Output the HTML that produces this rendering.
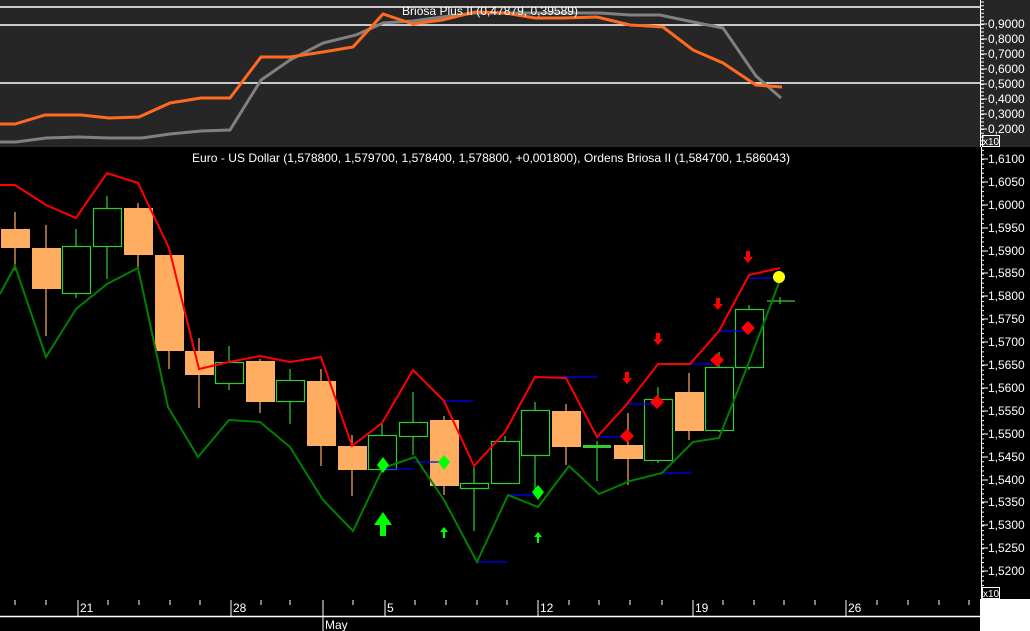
<!DOCTYPE html>
<html><head><meta charset="utf-8"><style>
html,body{margin:0;padding:0;background:#000;width:1030px;height:631px;overflow:hidden}
svg{display:block}
text{font-family:"Liberation Sans",sans-serif;fill:#fff;font-size:12px}
</style></head><body>
<svg width="1030" height="631" viewBox="0 0 1030 631" xmlns="http://www.w3.org/2000/svg">
<defs>
<pattern id="mt" patternUnits="userSpaceOnUse" x="0" y="159" width="10" height="4.58"><rect x="0" y="0" width="4" height="1" fill="#fff"/></pattern>
<pattern id="mt2" patternUnits="userSpaceOnUse" x="0" y="9" width="10" height="3.75"><rect x="0" y="0" width="4" height="1" fill="#fff"/></pattern>
</defs>
<rect x="0" y="0" width="1030" height="631" fill="#000"/>
<!-- top panel -->
<rect x="0" y="0" width="1030" height="147" fill="#262626"/>
<g stroke="#fff" stroke-width="1.5">
<line x1="0" y1="7" x2="980" y2="7"/><line x1="0" y1="25" x2="980" y2="25"/><line x1="0" y1="83" x2="980" y2="83"/>
</g>
<polyline fill="none" stroke="#808080" stroke-width="3" points="0,142 16,142 46,138 78,137 109,138 142,138 170,134 201,131 230,130 261,80 290,60 323,43 356,35 383,23 413,21 442,17 475,13 508,13 538,13 568,13 600,13 630,15 660,15 693,22 723,28 756,76 781,98"/>
<polyline fill="none" stroke="#FF6A20" stroke-width="3" points="0,124 15,124 45,115 81,115 109,118 139,117 170,103 201,98 230,98 261,57 290,57 323,52 353,47 383,14 413,24 442,20 475,12 505,13 535,18 564,18 597,17 630,25 663,27 693,50 723,63 756,85 782,87"/>
<text x="402" y="15" textLength="176" lengthAdjust="spacingAndGlyphs">Briosa Plus II (0,47879, 0,39589)</text>
<line x1="980.5" y1="0" x2="980.5" y2="147" stroke="#fff"/>
<rect x="980" y="0" width="4" height="147" fill="url(#mt2)"/>
<g stroke="#fff"><line x1="980" y1="24" x2="987" y2="24"/><line x1="980" y1="39" x2="987" y2="39"/><line x1="980" y1="54" x2="987" y2="54"/><line x1="980" y1="69" x2="987" y2="69"/><line x1="980" y1="84" x2="987" y2="84"/><line x1="980" y1="99" x2="987" y2="99"/><line x1="980" y1="114" x2="987" y2="114"/><line x1="980" y1="129" x2="987" y2="129"/></g>
<g><text x="988" y="28">0,9000</text><text x="988" y="43">0,8000</text><text x="988" y="58">0,7000</text><text x="988" y="73">0,6000</text><text x="988" y="88">0,5000</text><text x="988" y="103">0,4000</text><text x="988" y="118">0,3000</text><text x="988" y="133">0,2000</text></g>
<rect x="982.5" y="135.5" width="17" height="11" fill="none" stroke="#fff"/><text x="983" y="145" style="font-size:10px">x10</text>

<!-- main title -->
<text x="192" y="162" textLength="598" lengthAdjust="spacingAndGlyphs">Euro - US Dollar (1,578800, 1,579700, 1,578400, 1,578800, +0,001800), Ordens Briosa II (1,584700, 1,586043)</text>

<!-- wicks -->
<g stroke="#FFAD60" stroke-width="1.2">
<line x1="15" y1="212" x2="15" y2="270"/><line x1="46" y1="225" x2="46" y2="336"/><line x1="138" y1="203" x2="138" y2="267"/><line x1="169" y1="255" x2="169" y2="369"/><line x1="199" y1="338" x2="199" y2="408"/><line x1="260" y1="359" x2="260" y2="413"/><line x1="321" y1="369" x2="321" y2="466"/><line x1="352" y1="435" x2="352" y2="496"/><line x1="444" y1="416" x2="444" y2="495"/><line x1="566" y1="404" x2="566" y2="465"/><line x1="628" y1="413" x2="628" y2="485"/><line x1="689" y1="373" x2="689" y2="440"/>
</g>
<g stroke="#33CC33" stroke-width="1.2">
<line x1="76" y1="229" x2="76" y2="298"/><line x1="107" y1="196" x2="107" y2="279"/><line x1="229" y1="346" x2="229" y2="390"/><line x1="290" y1="369" x2="290" y2="424"/><line x1="382" y1="424" x2="382" y2="472"/><line x1="413" y1="392" x2="413" y2="455"/><line x1="474" y1="467" x2="474" y2="531"/><line x1="505" y1="436" x2="505" y2="483"/><line x1="535" y1="402" x2="535" y2="490"/><line x1="597" y1="441" x2="597" y2="481"/><line x1="658" y1="387" x2="658" y2="463"/><line x1="719" y1="352" x2="719" y2="432"/><line x1="749" y1="305" x2="749" y2="370"/>
<line x1="767" y1="301" x2="795" y2="301"/><line x1="780" y1="297" x2="780" y2="304"/>
</g>
<!-- bodies -->
<g fill="#FFAD60">
<rect x="1" y="229" width="29" height="19"/><rect x="32" y="248" width="29" height="41"/><rect x="124" y="208" width="29" height="47"/><rect x="155" y="255" width="29" height="96"/><rect x="185" y="351" width="29" height="24"/><rect x="246" y="361" width="29" height="41"/><rect x="307" y="381" width="29" height="65"/><rect x="338" y="446" width="29" height="24"/><rect x="430" y="420" width="29" height="66"/><rect x="552" y="411" width="29" height="36"/><rect x="614" y="445" width="29" height="14"/><rect x="675" y="392" width="29" height="39"/>
</g>
<g fill="#000" stroke="#33CC33" stroke-width="1.2">
<rect x="62.5" y="246.5" width="28" height="47"/><rect x="93.5" y="208.5" width="28" height="38"/><rect x="215.5" y="362.5" width="28" height="21"/><rect x="276.5" y="380.5" width="28" height="21"/><rect x="368.5" y="435.5" width="28" height="34"/><rect x="399.5" y="422.5" width="28" height="14"/><rect x="460.5" y="483.5" width="28" height="5"/><rect x="491.5" y="441.5" width="28" height="42"/><rect x="521.5" y="410.5" width="28" height="45"/><rect x="644.5" y="399.5" width="28" height="61"/><rect x="705.5" y="367.5" width="28" height="63"/><rect x="735.5" y="309.5" width="28" height="58"/>
</g>
<rect x="583" y="445" width="28" height="3" fill="#33CC33"/>

<!-- blue lines -->
<g stroke="#0000FF" stroke-width="1.3">
<line x1="383" y1="469" x2="413" y2="469"/><line x1="413" y1="462" x2="439" y2="462"/><line x1="443" y1="401" x2="473" y2="401"/><line x1="477" y1="562" x2="507" y2="562"/><line x1="508" y1="495" x2="535" y2="495"/><line x1="535" y1="377" x2="597" y2="377"/><line x1="597" y1="437" x2="623" y2="437"/><line x1="627" y1="404" x2="653" y2="404"/><line x1="662" y1="473" x2="692" y2="473"/><line x1="690" y1="364" x2="713" y2="364"/><line x1="719" y1="331" x2="747" y2="331"/><line x1="749" y1="278" x2="777" y2="278"/>
</g>
<!-- bands -->
<polyline fill="none" stroke="#008000" stroke-width="2" points="0,294 15,266 46,357 76,309 107,284 138,268 168,407 198,457 229,420 260,422 290,447 323,500 353,531 383,468 415,457 444,500 477,562 508,495 538,507 569,466 599,494 630,481 662,473 693,442 719,438 749,362 780,280"/>
<polyline fill="none" stroke="#FF0000" stroke-width="2" points="0,185 15,185 46,205 76,218 107,173 138,183 169,248 199,369 229,362 260,356 290,362 321,357 352,446 382,423 413,370 444,401 474,466 505,432 535,377 566,378 597,437 627,404 658,364 690,364 719,331 749,275 780,268"/>

<!-- diamonds -->
<g fill="#00FF00">
<polygon points="383,457 389,465 383,473 377,465"/><polygon points="444,455 450,462 444,470 438,462"/><polygon points="538,485 544,492 538,500 532,492"/>
<polygon points="374,525 383,512 392,525 386,525 386,536 380,536 380,525"/>
<polygon points="440,532 444,527 448,532 445,532 445,538 443,538 443,532"/>
<polygon points="534,537 538,532 542,537 539,537 539,543 537,543 537,537"/>
</g>
<g fill="#FF0000">
<polygon points="627,429 634,436 627,443 620,436"/><polygon points="657,395 664,402 657,409 650,402"/><polygon points="717,353 724,360 717,367 710,360"/><polygon points="748,321 755,328 748,335 741,328"/>
<polygon points="625,372 629,372 629,378 632,378 627,384 622,378 625,378"/>
<polygon points="656,333 660,333 660,339 663,339 658,345 653,339 656,339"/>
<polygon points="716,298 720,298 720,304 723,304 718,310 713,304 716,304"/>
<polygon points="746,251 750,251 750,257 753,257 748,263 743,257 746,257"/>
</g>
<circle cx="779" cy="277" r="6" fill="#FFFF00"/>

<!-- price axis -->
<line x1="981.5" y1="147" x2="981.5" y2="599" stroke="#fff"/>
<rect x="982" y="147" width="4" height="450" fill="url(#mt)"/>
<g stroke="#fff">
<line x1="981" y1="159" x2="988" y2="159"/><line x1="981" y1="182" x2="988" y2="182"/><line x1="981" y1="205" x2="988" y2="205"/><line x1="981" y1="228" x2="988" y2="228"/><line x1="981" y1="251" x2="988" y2="251"/><line x1="981" y1="273" x2="988" y2="273"/><line x1="981" y1="296" x2="988" y2="296"/><line x1="981" y1="319" x2="988" y2="319"/><line x1="981" y1="342" x2="988" y2="342"/><line x1="981" y1="365" x2="988" y2="365"/><line x1="981" y1="388" x2="988" y2="388"/><line x1="981" y1="411" x2="988" y2="411"/><line x1="981" y1="434" x2="988" y2="434"/><line x1="981" y1="457" x2="988" y2="457"/><line x1="981" y1="480" x2="988" y2="480"/><line x1="981" y1="502" x2="988" y2="502"/><line x1="981" y1="525" x2="988" y2="525"/><line x1="981" y1="548" x2="988" y2="548"/><line x1="981" y1="571" x2="988" y2="571"/>
</g>
<g>
<text x="988" y="163">1,6100</text><text x="988" y="186">1,6050</text><text x="988" y="209">1,6000</text><text x="988" y="232">1,5950</text><text x="988" y="255">1,5900</text><text x="988" y="277">1,5850</text><text x="988" y="300">1,5800</text><text x="988" y="323">1,5750</text><text x="988" y="346">1,5700</text><text x="988" y="369">1,5650</text><text x="988" y="392">1,5600</text><text x="988" y="415">1,5550</text><text x="988" y="438">1,5500</text><text x="988" y="461">1,5450</text><text x="988" y="484">1,5400</text><text x="988" y="506">1,5350</text><text x="988" y="529">1,5300</text><text x="988" y="552">1,5250</text><text x="988" y="575">1,5200</text>
</g>
<rect x="982.5" y="587.5" width="17" height="11" fill="#000" stroke="#fff"/><text x="983" y="597" style="font-size:10px">x10</text>
<rect x="980" y="599" width="50" height="32" fill="#fff"/>

<!-- date axis -->
<g stroke="#fff">
<line x1="15" y1="600" x2="15" y2="605"/><line x1="46" y1="600" x2="46" y2="605"/><line x1="78" y1="600" x2="78" y2="616"/><line x1="108" y1="600" x2="108" y2="605"/><line x1="139" y1="600" x2="139" y2="605"/><line x1="170" y1="600" x2="170" y2="605"/><line x1="200" y1="600" x2="200" y2="605"/><line x1="231" y1="600" x2="231" y2="616"/><line x1="261" y1="600" x2="261" y2="605"/><line x1="290" y1="600" x2="290" y2="605"/><line x1="323" y1="600" x2="323" y2="631"/><line x1="353" y1="600" x2="353" y2="605"/><line x1="385" y1="600" x2="385" y2="616"/><line x1="415" y1="600" x2="415" y2="605"/><line x1="446" y1="600" x2="446" y2="605"/><line x1="477" y1="600" x2="477" y2="605"/><line x1="507" y1="600" x2="507" y2="605"/><line x1="538" y1="600" x2="538" y2="616"/><line x1="569" y1="600" x2="569" y2="605"/><line x1="599" y1="600" x2="599" y2="605"/><line x1="630" y1="600" x2="630" y2="605"/><line x1="662" y1="600" x2="662" y2="605"/><line x1="693" y1="600" x2="693" y2="616"/><line x1="723" y1="600" x2="723" y2="605"/><line x1="754" y1="600" x2="754" y2="605"/><line x1="784" y1="600" x2="784" y2="605"/><line x1="815" y1="600" x2="815" y2="605"/><line x1="846" y1="600" x2="846" y2="616"/><line x1="877" y1="600" x2="877" y2="605"/><line x1="908" y1="600" x2="908" y2="605"/><line x1="939" y1="600" x2="939" y2="605"/><line x1="969" y1="600" x2="969" y2="605"/>
<line x1="0" y1="616.5" x2="980" y2="616.5" stroke-width="1.5"/>
</g>
<g><text x="80" y="612">21</text><text x="233" y="612">28</text><text x="387" y="612">5</text><text x="540" y="612">12</text><text x="695" y="612">19</text><text x="848" y="612">26</text><text x="325" y="629">May</text></g>
</svg>
</body></html>
